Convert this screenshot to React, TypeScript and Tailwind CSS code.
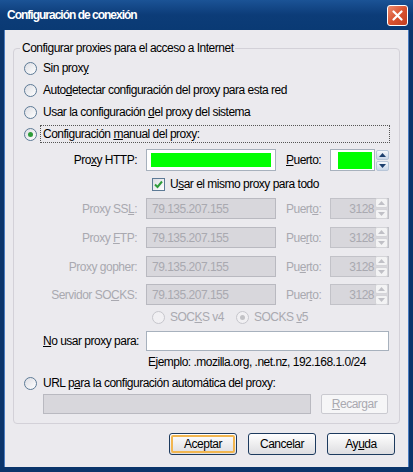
import React from "react";

const font = { fontFamily: '"Liberation Sans", Arial, sans-serif' };

function Radio({ checked = false, disabled = false }: { checked?: boolean; disabled?: boolean }) {
  return (
    <span
      className={`relative flex h-[13px] w-[13px] shrink-0 items-center justify-center rounded-full border ${
        disabled ? "border-[#c6c6cc] bg-[#f1f0f3]" : "border-[#5d7a96] bg-gradient-to-br from-[#dcdde3] to-white"
      }`}
    >
      {checked && (
        <span
          className={`h-[5px] w-[5px] rounded-full ${disabled ? "bg-[#c2c2c6]" : "bg-[#2e9c3a]"}`}
        />
      )}
    </span>
  );
}

function Spinner({ disabled = false }: { disabled?: boolean }) {
  const c = disabled ? "#c0c0c6" : "#1d3f6e";
  const box = disabled
    ? "border-[#d4d4d8] bg-[#f3f3f4]"
    : "border-[#b8c6d8] bg-gradient-to-b from-[#f6f8fb] to-[#c9d6e8]";
  return (
    <div className="flex w-[13px] flex-col gap-[1px]">
      <div className={`flex h-[10px] items-center justify-center rounded-[2px] border ${box}`}>
        <svg width="7" height="4" viewBox="0 0 7 4">
          <path d="M0 4 L3.5 0 L7 4 Z" fill={c} />
        </svg>
      </div>
      <div className={`flex h-[10px] items-center justify-center rounded-[2px] border ${box}`}>
        <svg width="7" height="4" viewBox="0 0 7 4">
          <path d="M0 0 L3.5 4 L7 0 Z" fill={c} />
        </svg>
      </div>
    </div>
  );
}

function DisabledRow({ label, port }: { label: React.ReactNode; port: React.ReactNode }) {
  return (
    <div className="flex h-[21px] items-center">
      <div className="w-[123px] text-right text-[#a9a9b0]">{label}</div>
      <div className="ml-[9px] flex h-[21px] w-[130px] items-center border border-[#b9b9c0] bg-[#d8d7dc] pl-[5px] text-[#a9a9b0]">
        79.135.207.155
      </div>
      <div className="ml-[10px] w-[44px] text-[#a9a9b0]">{port}</div>
      <div className="flex h-[21px] w-[59px] items-center border border-[#c2c2c8] bg-[#d8d7dc]">
        <span className="flex-1 pr-[1px] text-right text-[#a9a9b0]">3128</span>
        <Spinner disabled />
      </div>
    </div>
  );
}

function Button({ children, primary = false }: { children: React.ReactNode; primary?: boolean }) {
  return (
    <div className="h-[22px] w-[68px] rounded-[3px] border border-[#1c3a5e] bg-gradient-to-b from-white to-[#dddde0] p-[1px]">
      <div
        className={`flex h-full w-full items-center justify-center rounded-[2px] ${
          primary ? "border-2 border-[#f2b64f]" : ""
        }`}
      >
        <span>{children}</span>
      </div>
    </div>
  );
}

export default function App() {
  return (
    <div
      className="flex h-[472px] w-[413px] flex-col bg-[#0b356b] text-[12px] leading-[14px] tracking-[-0.5px] text-black"
      style={font}
    >
      {/* title bar */}
      <div className="flex h-[30px] items-center justify-between bg-gradient-to-b from-[#1b5396] via-[#0c3c78] to-[#0a3a74] pl-[7px] pr-[5px]">
        <span className="text-[12px] font-bold tracking-[-1px] text-white">Configuración de conexión</span>
        <div className="flex h-[21px] w-[21px] items-center justify-center rounded-[3px] border border-white bg-gradient-to-br from-[#ea8a6d] via-[#d9522f] to-[#c23f20]">
          <svg width="11" height="11" viewBox="0 0 11 11">
            <path d="M1.5 1.5 L9.5 9.5 M9.5 1.5 L1.5 9.5" stroke="white" strokeWidth="2.2" strokeLinecap="round" />
          </svg>
        </div>
      </div>

      {/* body */}
      <div className="mx-[4px] mb-[5px] flex flex-1 flex-col border-x border-[#4a7cc0] bg-[#ebeaee] px-[8px]">
        <fieldset className="mt-[11px] rounded-[4px] border border-[#d3d1d8] pb-[9px]">
          <legend className="ml-[6px] px-[2px]">Configurar proxies para el acceso a Internet</legend>

          <div className="pt-[2px]">
            <div className="flex h-[22px] items-center pl-[10px]">
              <Radio />
              <span className="ml-[6px]">
                Sin prox<u>y</u>
              </span>
            </div>
            <div className="flex h-[22px] items-center pl-[10px]">
              <Radio />
              <span className="ml-[6px]">
                Auto<u>d</u>etectar configuración del proxy para esta red
              </span>
            </div>
            <div className="flex h-[22px] items-center pl-[10px]">
              <Radio />
              <span className="ml-[6px]">
                Usar la configuración <u>d</u>el proxy del sistema
              </span>
            </div>
            <div className="flex h-[22px] items-center pl-[10px] pr-[9px]">
              <Radio checked />
              <div className="ml-[3px] flex h-[18px] flex-1 items-center border border-dotted border-[#555] pl-[2px]">
                <span>
                  Configuración <u>m</u>anual del proxy:
                </span>
              </div>
            </div>
          </div>

          {/* HTTP row */}
          <div className="mt-[4px] flex h-[22px] items-center">
            <div className="w-[123px] text-right">
              Pro<u>x</u>y HTTP:
            </div>
            <div className="ml-[9px] flex h-[22px] w-[130px] items-center border border-[#a7b1bd] bg-white px-[4px]">
              <div className="h-[14px] w-full bg-[#00ff00]" />
            </div>
            <div className="ml-[10px] w-[44px]">
              <u>P</u>uerto:
            </div>
            <div className="flex h-[22px] w-[45px] items-center border border-[#a7b1bd] bg-white pl-[7px] pr-[2px]">
              <div className="h-[17px] w-full bg-[#00ff00]" />
            </div>
            <div className="ml-[1px]">
              <Spinner />
            </div>
          </div>

          {/* checkbox */}
          <div className="mt-[2px] flex h-[22px] items-center pl-[138px]">
            <span className="flex h-[13px] w-[13px] items-center justify-center border border-[#5d7a96] bg-gradient-to-br from-[#dcdde3] to-white">
              <svg width="9" height="9" viewBox="0 0 9 9">
                <path d="M1 4.5 L3.5 7 L8 1.5" stroke="#2e9c3a" strokeWidth="2" fill="none" />
              </svg>
            </span>
            <span className="ml-[5px]">
              U<u>s</u>ar el mismo proxy para todo
            </span>
          </div>

          <div className="mt-[3px]">
            <DisabledRow
              label={
                <>
                  Proxy SS<u>L</u>:
                </>
              }
              port={
                <>
                  Puert<u>o</u>:
                </>
              }
            />
          </div>
          <div className="mt-[8px]">
            <DisabledRow
              label={
                <>
                  Proxy <u>F</u>TP:
                </>
              }
              port={
                <>
                  Pue<u>r</u>to:
                </>
              }
            />
          </div>
          <div className="mt-[8px]">
            <DisabledRow
              label={
                <>
                  Proxy <u>g</u>opher:
                </>
              }
              port={
                <>
                  Pu<u>e</u>rto:
                </>
              }
            />
          </div>
          <div className="mt-[7px]">
            <DisabledRow
              label={
                <>
                  Servidor SO<u>C</u>KS:
                </>
              }
              port={
                <>
                  Puer<u>t</u>o:
                </>
              }
            />
          </div>

          {/* socks version */}
          <div className="mt-[2px] flex h-[20px] items-center pl-[138px] text-[#a9a9b0]">
            <Radio disabled />
            <span className="ml-[5px] w-[66px]">
              SOC<u>K</u>S v4
            </span>
            <Radio checked disabled />
            <span className="ml-[5px]">
              SOCKS <u>v</u>5
            </span>
          </div>

          {/* no proxy */}
          <div className="mt-[4px] flex h-[20px] items-center">
            <div className="w-[123px] whitespace-nowrap pl-[29px]">
              <u>N</u>o usar proxy para:
            </div>
            <div className="ml-[9px] h-[20px] w-[243px] border border-[#a7b1bd] bg-white" />
          </div>
          <div className="mt-[3px] flex h-[16px] items-center pl-[134px]">
            Ejemplo: .mozilla.org, .net.nz, 192.168.1.0/24
          </div>

          {/* url */}
          <div className="mt-[3px] flex h-[20px] items-center pl-[10px]">
            <Radio />
            <span className="ml-[6px]">
              URL p<u>a</u>ra la configuración automática del proxy:
            </span>
          </div>
          <div className="mt-[1px] flex h-[20px] items-center pl-[29px]">
            <div className="h-[20px] w-[268px] border border-[#b9b9c0] bg-[#d8d7dc]" />
            <div className="ml-[10px] flex h-[20px] w-[67px] items-center justify-center rounded-[2px] border border-[#cacad0] bg-[#f6f6f7] text-[#a9a9b0]">
              <span>
                <u>R</u>ecargar
              </span>
            </div>
          </div>
        </fieldset>

        <div className="mt-[9px] flex justify-end gap-[11px] pr-[5px]">
          <Button primary>Aceptar</Button>
          <Button>Cancelar</Button>
          <Button>
            Ay<u>u</u>da
          </Button>
        </div>
      </div>
    </div>
  );
}
